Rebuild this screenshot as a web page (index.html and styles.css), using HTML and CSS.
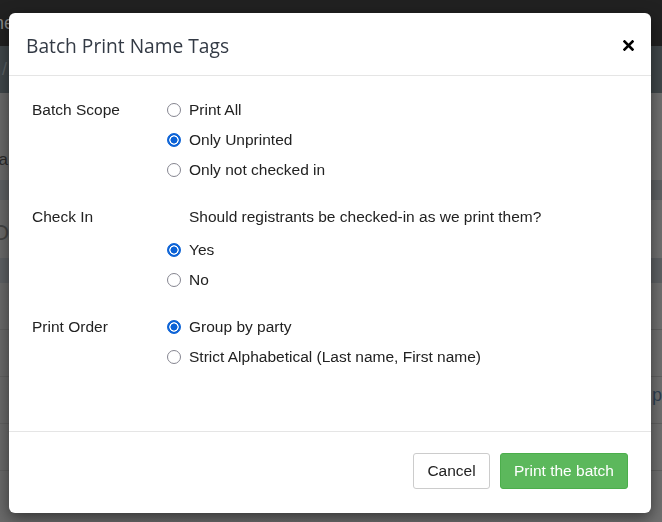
FILE: index.html
```html
<!DOCTYPE html>
<html lang="en">
<head>
<meta charset="utf-8">
<title>Batch Print Name Tags</title>
<link rel="stylesheet" href="styles.css">
</head>
<body>
<div class="page">
  <div class="navbar"><span class="brand">Home</span></div>
  <div class="subbar"><span class="crumb">/</span></div>
  <div class="content">
    <div class="row-a"><span class="frag">ca</span></div>
    <div class="band"></div>
    <div class="row-b"><span class="frag-o">O</span></div>
    <div class="band band-2"></div>
    <div class="row-c"></div>
    <div class="row-c"></div>
    <div class="row-c"><span class="frag-pr">pr</span></div>
    <div class="row-c"></div>
  </div>
</div>

<div class="overlay">
  <div class="modal">
    <div class="modal-header">
      <h4 class="modal-title">Batch Print Name Tags</h4>
      <button class="close" aria-label="Close">
        <svg width="11" height="11" viewBox="0 0 11 11"><path d="M1.5 1.5 L9.5 9.5 M9.5 1.5 L1.5 9.5" stroke="#000" stroke-width="2.6" stroke-linecap="square"/></svg>
      </button>
    </div>
    <div class="modal-body">
      <div class="group">
        <div class="label">Batch Scope</div>
        <div class="options">
          <label class="opt"><input type="radio" name="scope"><span>Print All</span></label>
          <label class="opt"><input type="radio" name="scope" checked><span>Only Unprinted</span></label>
          <label class="opt"><input type="radio" name="scope"><span>Only not checked in</span></label>
        </div>
      </div>
      <div class="group">
        <div class="label">Check In</div>
        <div class="options">
          <div class="question">Should registrants be checked-in as we print them?</div>
          <label class="opt"><input type="radio" name="checkin" checked><span>Yes</span></label>
          <label class="opt"><input type="radio" name="checkin"><span>No</span></label>
        </div>
      </div>
      <div class="group">
        <div class="label">Print Order</div>
        <div class="options">
          <label class="opt"><input type="radio" name="order" checked><span>Group by party</span></label>
          <label class="opt"><input type="radio" name="order"><span>Strict Alphabetical (Last name, First name)</span></label>
        </div>
      </div>
    </div>
    <div class="modal-footer">
      <button class="btn btn-default">Cancel</button>
      <button class="btn btn-success">Print the batch</button>
    </div>
  </div>
</div>
</body>
</html>
```

FILE: styles.css
```css
html, body {
  margin: 0;
  padding: 0;
}
body {
  width: 662px;
  height: 522px;
  overflow: hidden;
  background: #6c6c6c;
  font-family: "Liberation Sans", Arial, sans-serif;
}

/* dimmed page underneath */
.page {
  height: 522px;
}
.navbar {
  height: 46px;
  background: #212121;
  color: #8a8a8a;
  font-size: 18px;
  line-height: 46px;
}
.brand {
  margin-left: -34px;
}
.subbar {
  height: 47px;
  background: #40474a;
  color: #5d6366;
  font-size: 18px;
  line-height: 47px;
}
.crumb {
  margin-left: 2px;
}
.content {
  background: linear-gradient(to right, #6a6a6a, #707070);
  height: 429px;
}
.row-a {
  height: 87px;
}
.frag {
  display: block;
  padding-top: 57px;
  margin-left: -10px;
  color: #2a2a2a;
  font-size: 17px;
}
.band {
  height: 20px;
  background: #5e6164;
}
.row-b {
  height: 58px;
  font-size: 22px;
  color: #444;
}
.frag-o {
  display: block;
  padding-top: 20px;
  margin-left: -8px;
}
.band-2 {
  height: 25px;
}
.row-c {
  height: 46px;
  border-bottom: 1px solid #616161;
  font-size: 18px;
}
.frag-pr {
  display: block;
  text-align: right;
  margin-right: -6px;
  padding-top: 8px;
  color: #2d3f52;
}

/* modal */
.overlay {
  position: fixed;
  inset: 0;
  padding: 13px 0 0 9px;
}
.modal {
  width: 642px;
  height: 500px;
  background: #fff;
  border-radius: 6px;
  box-shadow: 0 5px 15px rgba(0, 0, 0, 0.5);
  display: flex;
  flex-direction: column;
  color: #222;
}
.modal-header {
  height: 62px;
  border-bottom: 1px solid #e5e5e5;
  display: flex;
  align-items: center;
  justify-content: space-between;
  padding: 0 17px 0 17px;
}
.modal-title {
  margin: 0;
  font-family: "Open Sans", sans-serif;
  font-weight: 400;
  font-size: 19.2px;
  color: #333a45;
  padding-top: 2px;
}
.close {
  background: none;
  border: 0;
  padding: 0;
  width: 11px;
  height: 11px;
  display: flex;
  margin-top: 2px;
}

.modal-body {
  flex: 1;
  padding: 19px 23px 0 23px;
  font-size: 15.5px;
}
.group {
  display: flex;
  margin-bottom: 17px;
}
.label {
  width: 135px;
  line-height: 30px;
  height: 30px;
}
.options {
  display: flex;
  flex-direction: column;
}
.question {
  line-height: 30px;
  height: 33px;
  padding-left: 22px;
}
.opt {
  height: 30px;
  display: flex;
  align-items: center;
  white-space: nowrap;
}
.opt input {
  appearance: none;
  -webkit-appearance: none;
  margin: 0 8px 0 0;
  width: 14px;
  height: 14px;
  border: 1.5px solid #858590;
  border-radius: 50%;
  background: #fff;
  box-sizing: border-box;
  flex: none;
}
.opt input:checked {
  border: 1px solid #0b62d6;
  background: radial-gradient(circle, #0b62d6 0 3.2px, #fff 3.8px 4.4px, #0b62d6 5px);
}

.modal-footer {
  border-top: 1px solid #e5e5e5;
  padding: 21px 23px 24px 0;
  display: flex;
  justify-content: flex-end;
  gap: 10px;
}
.btn {
  height: 36px;
  font-family: "Liberation Sans", Arial, sans-serif;
  font-size: 15.5px;
  border-radius: 3px;
  border: 1px solid;
  padding: 0;
  white-space: nowrap;
  cursor: pointer;
}
.btn-default {
  width: 77px;
  background: #fff;
  border-color: #ccc;
  color: #222;
}
.btn-success {
  width: 128px;
  background: #5cb85c;
  border-color: #4cae4c;
  color: #fff;
}
```
